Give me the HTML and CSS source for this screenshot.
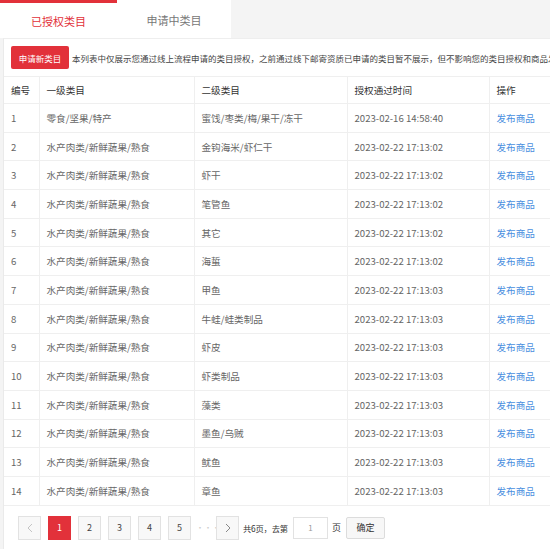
FILE: index.html
```html
<!DOCTYPE html>
<html lang="zh-CN">
<head>
<meta charset="utf-8">
<link rel="stylesheet" href="styles.css">
</head>
<body>
<div class="page">
  <div class="tabs">
    <div class="tab active">已授权类目</div>
    <div class="tab">申请中类目</div>
  </div>
  <div class="panel">
    <div class="toolbar">
      <button class="btn-apply">申请新类目</button>
      <span class="notice">本列表中仅展示您通过线上流程申请的类目授权，之前通过线下邮寄资质已申请的类目暂不展示，但不影响您的类目授权和商品发布。</span>
    </div>
    <table class="grid">
      <colgroup>
        <col class="c-no"><col class="c-l1"><col class="c-l2"><col class="c-time"><col class="c-op">
      </colgroup>
      <thead>
        <tr><th>编号</th><th>一级类目</th><th>二级类目</th><th>授权通过时间</th><th>操作</th></tr>
      </thead>
      <tbody>
        <tr><td>1</td><td>零食/坚果/特产</td><td>蜜饯/枣类/梅/果干/冻干</td><td>2023-02-16 14:58:40</td><td><a class="link">发布商品</a></td></tr>
        <tr><td>2</td><td>水产肉类/新鲜蔬果/熟食</td><td>金钩海米/虾仁干</td><td>2023-02-22 17:13:02</td><td><a class="link">发布商品</a></td></tr>
        <tr><td>3</td><td>水产肉类/新鲜蔬果/熟食</td><td>虾干</td><td>2023-02-22 17:13:02</td><td><a class="link">发布商品</a></td></tr>
        <tr><td>4</td><td>水产肉类/新鲜蔬果/熟食</td><td>笔管鱼</td><td>2023-02-22 17:13:02</td><td><a class="link">发布商品</a></td></tr>
        <tr><td>5</td><td>水产肉类/新鲜蔬果/熟食</td><td>其它</td><td>2023-02-22 17:13:02</td><td><a class="link">发布商品</a></td></tr>
        <tr><td>6</td><td>水产肉类/新鲜蔬果/熟食</td><td>海蜇</td><td>2023-02-22 17:13:02</td><td><a class="link">发布商品</a></td></tr>
        <tr><td>7</td><td>水产肉类/新鲜蔬果/熟食</td><td>甲鱼</td><td>2023-02-22 17:13:03</td><td><a class="link">发布商品</a></td></tr>
        <tr><td>8</td><td>水产肉类/新鲜蔬果/熟食</td><td>牛蛙/蛙类制品</td><td>2023-02-22 17:13:03</td><td><a class="link">发布商品</a></td></tr>
        <tr><td>9</td><td>水产肉类/新鲜蔬果/熟食</td><td>虾皮</td><td>2023-02-22 17:13:03</td><td><a class="link">发布商品</a></td></tr>
        <tr><td>10</td><td>水产肉类/新鲜蔬果/熟食</td><td>虾类制品</td><td>2023-02-22 17:13:03</td><td><a class="link">发布商品</a></td></tr>
        <tr><td>11</td><td>水产肉类/新鲜蔬果/熟食</td><td>藻类</td><td>2023-02-22 17:13:03</td><td><a class="link">发布商品</a></td></tr>
        <tr><td>12</td><td>水产肉类/新鲜蔬果/熟食</td><td>墨鱼/乌贼</td><td>2023-02-22 17:13:03</td><td><a class="link">发布商品</a></td></tr>
        <tr><td>13</td><td>水产肉类/新鲜蔬果/熟食</td><td>鱿鱼</td><td>2023-02-22 17:13:03</td><td><a class="link">发布商品</a></td></tr>
        <tr><td>14</td><td>水产肉类/新鲜蔬果/熟食</td><td>章鱼</td><td>2023-02-22 17:13:03</td><td><a class="link">发布商品</a></td></tr>
      </tbody>
    </table>
    <div class="pager">
      <span class="pg disabled"><svg width="6" height="10" viewBox="0 0 6 10"><polyline points="5,1 1,5 5,9" fill="none" stroke="currentColor" stroke-width="1"/></svg></span>
      <span class="pg current">1</span>
      <span class="pg">2</span>
      <span class="pg">3</span>
      <span class="pg">4</span>
      <span class="pg">5</span>
      <span class="dots">···</span>
      <span class="pg arrow"><svg width="6" height="10" viewBox="0 0 6 10"><polyline points="1,1 5,5 1,9" fill="none" stroke="currentColor" stroke-width="1"/></svg></span>
      <span class="total">共6页，去第</span>
      <input class="goto" type="text" value="1">
      <span class="unit">页</span>
      <button class="ok">确定</button>
    </div>
  </div>
</div>
</body>
</html>
```
FILE: styles.css
```css
html, body {
  margin: 0;
  padding: 0;
  background: #f4f4f4;
  overflow: hidden;
}
body {
  font-family: "Noto Sans CJK SC", "Noto Sans", sans-serif;
  color: #666;
  width: 550px;
  height: 549px;
}
.page {
  padding-left: 3px;
  width: 640px;
}
.tabs {
  display: flex;
  height: 38px;
}
.tab {
  width: 114px;
  display: flex;
  align-items: center;
  justify-content: center;
  font-size: 11px;
  color: #777;
  background: #fff;
  box-sizing: border-box;
  padding-top: 2px;
}
.tab.active {
  color: #e2313a;
  border-top: 3px solid #e2313a;
  padding-top: 0;
  margin-left: -3px;
  width: 117px;
}
.panel {
  background: #fff;
  border-top: 1px solid #eeeeee;
  border-left: 1px solid #eaeaea;
  padding: 7px 0 0 0;
  height: 600px;
}
.toolbar {
  display: flex;
  align-items: center;
  padding-left: 7px;
  white-space: nowrap;
}
.btn-apply {
  background: #e2313a;
  color: #fff;
  border: 0;
  border-radius: 2px;
  width: 58px;
  height: 23px;
  padding: 0;
  font-family: inherit;
  font-size: 8.5px;
}
.notice {
  margin-left: 3px;
  font-size: 8.5px;
  color: #444;
}
.grid {
  margin-top: 7px;
  border-collapse: collapse;
  table-layout: fixed;
  width: 635px;
  font-size: 9.6px;
}
.c-no { width: 35px; }
.c-l1 { width: 155px; }
.c-l2 { width: 153px; }
.c-time { width: 142px; }
.c-op { width: 150px; }
.grid th, .grid td {
  border-top: 1px solid #efefef;
  border-bottom: 1px solid #efefef;
  border-left: 1px solid #efefef;
  text-align: left;
  padding: 0 0 0 7px;
  white-space: nowrap;
}
.grid th:first-child, .grid td:first-child {
  border-left: 0;
}
.grid th {
  height: 26px;
  font-weight: normal;
  color: #333;
}
.grid td {
  height: 27.7px;
  color: #666;
}
.link {
  color: #4a8fe0;
}
.pager {
  display: flex;
  align-items: center;
  padding: 10px 0 0 14px;
  font-size: 9px;
  color: #333;
}
.pg {
  width: 23px;
  height: 24px;
  box-sizing: border-box;
  border: 1px solid #e2e2e2;
  background: #f8f8f8;
  display: flex;
  align-items: center;
  justify-content: center;
  margin-right: 7px;
  color: #444;
}
.pg.disabled {
  color: #c4c4c4;
}
.pg.arrow {
  color: #888;
  margin-right: 4px;
}
.pg.current {
  background: #e2313a;
  border-color: #e2313a;
  color: #fff;
}
.dots {
  width: 16px;
  color: #ccc;
  margin-left: -2px;
  margin-right: 4px;
  text-align: center;
  font-size: 8px;
}
.total {
  font-size: 8.3px;
  letter-spacing: -0.2px;
}
.goto {
  width: 35px;
  height: 22px;
  box-sizing: border-box;
  border: 1px solid #e2e2e2;
  margin: 0 0 0 5px;
  text-align: center;
  font-family: inherit;
  font-size: 8px;
  color: #999;
  padding: 0;
}
.unit {
  margin-left: 4px;
}
.ok {
  margin-left: 5px;
  width: 39px;
  height: 22px;
  border: 1px solid #dcdcdc;
  background: #f7f7f7;
  border-radius: 2px;
  font-family: inherit;
  font-size: 9px;
  color: #333;
  padding: 0;
}
```
